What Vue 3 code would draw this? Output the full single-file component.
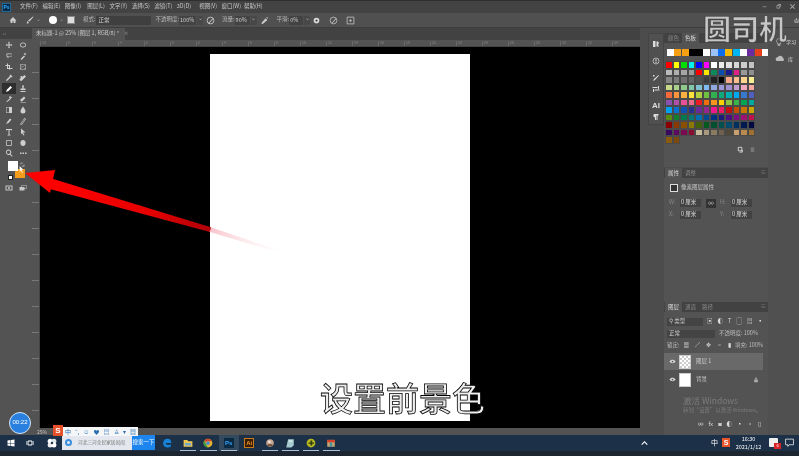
<script setup>
const menus = ['文件(F)','编辑(E)','图像(I)','图层(L)','文字(Y)','选择(S)','滤镜(T)','3D(D)','视图(V)','窗口(W)','帮助(H)']
const tools = [
  'M8 1l2 3H9v3h3V6l3 2-3 2V9H9v3h1l-2 3-2-3h1V9H4v1L1 8l3-2v1h3V4H6z',
  'M8 3c4 0 6 2 6 5s-2 5-6 5-6-2-6-5 2-5 6-5zm0 1.500C5 4.500 3.500 6 3.500 8S5 11.500 8 11.500 12.500 10 12.500 8 11 4.500 8 4.500z',
  'M3 3h10v7H8l-2 2v2L5 10 3 9zm1.500 1.500v3.500l2 1h6V4.500z',
  'M3 14l7-7 2 2-7 7zM12 1l1 2 2 1-2 1-1 2-1-2-2-1 2-1z',
  'M4 1h2v9h9v2H4zM1 4h9v9H8V6H1z',
  'M2 3h12v10H2zm1 1v8h10V4zM3 4l10 8-.500.500L3 4.500zM13 4L3 12l-.500-.500L13 3.500z',
  'M11 1l4 4-2 2-1-1-7 7-3 1 1-3 7-7-1-1z',
  'M11 2l3 3-9 9-3-1-1-3zM3 4h3v3H3z',
  'M2 14l2-5 7-7 3 3-7 7z',
  'M6 1h4l-1 6h4v3H3V7h4zM3 12h10v2H3z',
  'M2 14l7-7 2 2-7 5zM10 2l4 3-3 3-3-3z',
  'M6 13l7-7-3-3-8 7 3 3zM3 14h11v1H3z',
  'M2 2h12v12H2zm1 1v10h5V3z',
  'M8 1c3 5 5 7 5 9a5 5 0 0 1-10 0c0-2 2-4 5-9z',
  'M2 14l3-5 5-6 3 2-5 6-5 3z',
  'M3 13L11 2l3 2-8 11-3 1zm1 0l1 1 7-9-1-1z',
  'M2 2h12v3h-1l-1-1H9v9l2 1v1H5v-1l2-1V4H4L3 5H2z',
  'M4 1l9 8H8l3 5-2 1-3-5-2 3z',
  'M4 2h8a3 3 0 0 1 2 2v8a3 3 0 0 1-2 2H4a3 3 0 0 1-2-2V4a3 3 0 0 1 2-2zm0 1.500A.500.500 0 0 0 3.500 4v8a.500.500 0 0 0 .500.500h8a.500.500 0 0 0 .500-.500V4a.500.500 0 0 0-.500-.500z',
  'M3 9c-1-4 2-7 5-7s6 3 5 7c0 3-2 5-5 5s-5-2-5-5z',
  'M7 1a5.500 5.500 0 0 1 4.300 9l4 4-1.300 1.300-4-4A5.500 5.500 0 1 1 7 1zm0 2a3.500 3.500 0 1 0 0 7 3.500 3.500 0 0 0 0-7z',
  'M2 7h3v3H2zM7 7h3v3H7zM12 7h3v3h-3z'
]
const top = ['#fff','#f5a012','#f5a012','#000','#000','#fff','#9cc3f5','#0a6cf0','#f7b900','#00b4f0','#fff','#6a2ca0','#e8401c','#fff']
const swatches = [
  '#f00','#ff0','#00e000','#00f0f0','#00f','#f0f','#fff','#ebebeb','#e1e1e1','#d7d7d7','#cdcdcd','#c3c3c3',
  '#b9b9b9','#afafaf','#a5a5a5','#9b9b9b','#f00','#ffe600','#0a8a5a','#0a4fb0','#1a1a90','#e0208a','#999','#8f8f8f',
  '#858585','#7b7b7b','#6f6f6f','#656565','#505050','#3c3c3c','#222','#000','#f7a98a','#f9bb90','#fbd28e','#f7ef90',
  '#c8d88a','#a8d08a','#8fca8a','#80c8a8','#80c0d0','#80b8f0','#90a8e0','#9a98d8','#a090d0','#c09cd0','#f0a8c0','#f4a8a0',
  '#f26a3c','#f7943c','#fbb040','#fde23a','#b0d040','#70c040','#30b050','#10a878','#00b0b0','#00a8f0','#3878d0','#5060c0',
  '#8a50b0','#b050a8','#e8509a','#ee6a8a','#ed1c24','#f26d0c','#f7941e','#fdd000','#8dc63f','#39b54a','#00a651','#00a99d',
  '#00a0f0','#0a70d0','#1050b0','#2a3090','#6a2a9a','#92278f','#ec1a8c','#ed1c64','#c01010','#c05000','#c87800','#c8a800',
  '#5a8a10','#108030','#007a50','#007a78','#0070b0','#004a90','#003080','#1a1a78','#4a1080','#7a1080','#a01070','#c01050',
  '#8a0000','#8a3a00','#8a5000','#8a7a00','#406010','#005a20','#005030','#005050','#004a70','#003060','#001a50','#000a40',
  '#3a0a60','#5a0a60','#7a0a50','#8a0a30','#c8b89a','#a89880','#8a7a60','#706050','#504838','#c8a070','#b88a50','#a07030',
  '#8a5a10','#7a4a10'
]
const rulerTop = ['10','8','6','4','2','0','2','4','6','8','10','12','14','16','18','20','22','24','26','28','30','32','34']
const imeIcons = ['中','°,','☺','♥','▤','♙','▾','▦']
</script>

<template>
  <div class="app">
    <header class="menubar">
      <span class="logo">Ps</span>
      <span v-for="m in menus" :key="m" class="menu">{{ m }}</span>
      <span class="winctl">
        <svg viewBox="0 0 8 8"><path d="M1 4h6v1H1z" /></svg>
        <svg viewBox="0 0 8 8"><path d="M1 2h5v5H1zm1 1v3h3V3zM3 0h5v5H7V1H3z" /></svg>
        <svg viewBox="0 0 8 8"><path d="M1 0l3 3 3-3 1 1-3 3 3 3-1 1-3-3-3 3-1-1 3-3-3-3z" /></svg>
      </span>
    </header>

    <div class="options">
      <svg class="ic" viewBox="0 0 16 16"><path d="M8 2l7 7h-2v5H9v-4H7v4H3V9H1z" /></svg>
      <svg class="ic brush" viewBox="0 0 16 16"><path d="M14 1l1 1-8 9-3-2zM3 10l3 3c-1 2-3 2-5 2 1-1 1-4 2-5z" /></svg>
      <span class="caret">⌄</span>
      <span class="dot"></span>
      <span class="caret">⌄</span>
      <span class="pbtn"></span>
      <span class="lbl mode">模式:</span>
      <span class="select">正常</span>
      <span class="lbl opa">不透明度:</span><span class="val v1">100%</span><span class="mini">⌄</span>
      <svg class="ic gap" viewBox="0 0 16 16"><circle cx="8" cy="8" r="6" fill="none" stroke="#ccc" stroke-width="1.5" /><path d="M4 13l8-9 1 1-8 9z" /></svg>
      <span class="lbl">流量:</span><span class="val v2">90%</span><span class="mini">⌄</span>
      <svg class="ic gap g2" viewBox="0 0 16 16"><path d="M2 13l8-9 3 3-8 7zM11 2h3v3h-1V3h-2z" /></svg>
      <span class="lbl">平滑:</span><span class="val v3">0%</span><span class="mini">⌄</span>
      <svg class="ic gap g3" viewBox="0 0 16 16"><circle cx="8" cy="8" r="5" fill="#ddd" /><circle cx="8" cy="8" r="2" fill="#444" /></svg>
      <svg class="ic gap g3" viewBox="0 0 16 16"><circle cx="8" cy="8" r="6" fill="none" stroke="#bbb" stroke-width="1.5" /><path d="M5 12l7-8 1 1-7 8z" /></svg>
      <svg class="ic gap g3" viewBox="0 0 16 16"><path d="M2 2h12v12H2z" fill="none" stroke="#bbb" stroke-width="1.5" /><circle cx="8" cy="8" r="2" /></svg>
    </div>

    <div class="workspace">
      <aside class="tools">
        <div class="collapse">‹‹</div>
        <div class="toolgrid">
          <span v-for="(d, i) in tools" :key="i" class="tool" :class="{ on: i === 8 }">
            <svg viewBox="0 0 16 16"><path :d="d" /></svg>
          </span>
        </div>
        <div class="colors">
          <span class="bg"></span>
          <span class="fg"></span>
          <svg class="swap" viewBox="0 0 8 8"><path d="M1 1h4v1H2v2H1zM7 7H3V6h3V4h1z" /></svg>
          <svg class="cursor" viewBox="0 0 8 11"><path d="M1 0l6 6H4l2 4-1 1-2-4-2 2z" /></svg>
          <span class="reset"></span>
        </div>
        <div class="modes">
          <svg viewBox="0 0 16 16"><path d="M1 3h14v10H1zm2 2v6h10V5z" /><circle cx="8" cy="8" r="2" /></svg>
          <svg viewBox="0 0 16 16"><path d="M5 2h10v8h-4v3H1V6h4zM6 3v3h5v3h3V3z" /></svg>
        </div>
      </aside>

      <main class="doc">
        <div class="tabs"><span class="tab">未标题-1 @ 25% (图层 1, RGB/8) * <em>×</em></span></div>
        <div class="ruler-top">
          <span v-for="(r, i) in rulerTop" :key="i">{{ r }}</span>
        </div>
        <div class="middle">
          <div class="ruler-left"></div>
          <div class="canvas">
            <div class="paper"></div>
            <div class="caption">设置前景色</div>
          </div>
        </div>
        <div class="status">25%</div>
      </main>

      <section class="dock">
        <div class="collapsed">
          <svg viewBox="0 0 16 16"><path d="M2 2h5v12H2zM9 3h3l2 3-2 3 2 4H9z" /></svg>
          <svg class="lower" viewBox="0 0 16 16"><circle cx="8" cy="8" r="6" fill="none" stroke="#ddd" stroke-width="1.4" /><path d="M7 4h2v5H7zM7 10h2v2H7z" /></svg>
          <svg class="lower" viewBox="0 0 16 16"><path d="M2 14l2-4 9-8 1 1-8 9zM2 2h3v3H2z" /></svg>
          <svg viewBox="0 0 16 16"><path d="M1 4h10v2H1zM5 9h10v2H5zM12 2h2v6h-2zM2 8h2v6H2z" /></svg>
          <b class="lower">AI</b>
          <svg viewBox="0 0 16 16"><path d="M4 2h9v3h-2v9H9V5H8v9H6V9a4 4 0 0 1-2-7z" /></svg>
        </div>

        <div class="panels">
          <div class="panel swatch-panel">
            <div class="ptabs"><span class="dim">颜色</span><span class="active">色板</span></div>
            <div class="swatch-top">
              <i v-for="(c, i) in top" :key="i" :style="{ background: c }"></i>
            </div>
            <div class="swatch-grid">
              <i v-for="(c, i) in swatches" :key="i" :style="{ background: c }"></i>
            </div>
            <div class="pfoot">
              <svg viewBox="0 0 16 16"><path d="M3 3h8v8H3zM12 9v5H6" fill="none" stroke="#ddd" stroke-width="2" /></svg>
              <svg viewBox="0 0 16 16"><path d="M4 3h8v11H4z" fill="#777" /></svg>
            </div>
          </div>

          <div class="panel prop-panel">
            <div class="ptabs"><span class="active">属性</span><span class="dim">调整</span><em class="pmenu">≡</em></div>
            <div class="prophead"><span class="propicon"></span>像素图层属性</div>
            <div class="propbody">
              <div class="prow"><label>W:</label><span class="field">0 厘米</span><span class="link">∞</span><label>H:</label><span class="field">0 厘米</span></div>
              <div class="prow"><label>X:</label><span class="field">0 厘米</span><span class="link none"></span><label>Y:</label><span class="field">0 厘米</span></div>
            </div>
          </div>

          <div class="panel layer-panel">
            <div class="ptabs"><span class="active">图层</span><span class="dim">通道</span><span class="dim">路径</span><em class="pmenu">≡</em></div>
            <div class="lrow first">
              <span class="lsel kind">⚲ 类型</span>
              <span class="licons"><i>▣</i><i>◐</i><i>T</i><i>▢</i><i>▤</i><i>▪</i></span>
            </div>
            <div class="lrow">
              <span class="lsel blend">正常</span>
              <span class="ltxt">不透明度: 100%</span>
            </div>
            <div class="lrow">
              <span class="ltxt">锁定:</span><span class="licons"><i>▦</i><i>∕</i><i>✥</i><i>▫</i><i>▮</i></span><span class="ltxt">填充: 100%</span>
            </div>
            <div class="layer sel">
              <svg class="eye" viewBox="0 0 16 10"><path d="M1 5c4-5 10-5 14 0-4 5-10 5-14 0z" /><circle cx="8" cy="5" r="2" fill="#555" /></svg>
              <span class="thumb checker"></span><span>图层 1</span>
            </div>
            <div class="layer">
              <svg class="eye" viewBox="0 0 16 10"><path d="M1 5c4-5 10-5 14 0-4 5-10 5-14 0z" /><circle cx="8" cy="5" r="2" fill="#555" /></svg>
              <span class="thumb"></span><span>背景</span>
              <svg class="lockic" viewBox="0 0 16 16"><path d="M3 7h10v7H3zM5 7V4a3 3 0 0 1 6 0v3H9V4a1 1 0 0 0-2 0v3z" /></svg>
            </div>
            <div class="activate">
              <p class="a1">激活 Windows</p>
              <p class="a2">转到“设置”以激活 Windows。</p>
            </div>
            <div class="lfoot">
              <span>∞</span><span>fx</span><span>◙</span><span>◐</span><span>▪</span><span>▫</span><span>▯</span>
            </div>
          </div>
        </div>

        <div class="side">
          <svg class="power" viewBox="0 0 8 8"><path d="M3.500 0h1v4h-1zM1 2h1v4h4V2h1v5H1z" /></svg>
          <div class="sideitem"><svg viewBox="0 0 16 16"><path d="M8 1a5 5 0 0 1 3 9v2H5v-2a5 5 0 0 1 3-9zM6 13h4v2H6z" fill="none" stroke="#ddd" /></svg>学习</div>
          <div class="sideitem lib"><svg viewBox="0 0 16 10"><path d="M4 9a3 3 0 0 1 0-6 5 5 0 0 1 9 1 3 3 0 0 1 0 5z" /></svg>库</div>
        </div>
      </section>
    </div>

    <footer class="taskbar">
      <svg class="tb win" viewBox="0 0 16 16"><path d="M1 3l6-1v6H1zM8 2l7-1v7H8zM1 9h6v5l-6-1zM8 9h7v6l-7-1z" /></svg>
      <svg class="tb view" viewBox="0 0 16 16"><path d="M1 4h2v8H1zM13 4h2v8h-2zM4 3h8v10H4zM5 5v6h6V5z" /></svg>
      <svg class="tb multi" viewBox="0 0 16 16"><circle cx="5" cy="5" r="4" fill="#fff" /><circle cx="11" cy="5" r="4" fill="#dfe8e8" /><circle cx="5" cy="11" r="4" fill="#eee" /><circle cx="11" cy="11" r="4" fill="#fff" /><circle cx="8" cy="8" r="2" fill="#1f3550" /></svg>
      <div class="search"><span class="sicon"></span><span class="stext">河北三河全民家居闹闹</span><span class="sbtn">搜索一下</span></div>
      <div class="apps">
        <span class="app-i"><svg viewBox="0 0 16 16"><path d="M2 8c0-5 3-7 7-7 4 0 6 3 6 7H6c0 3 4 4 8 2v4c-6 3-13 0-12-6z" fill="#1683d8" /></svg></span>
        <span class="app-i u"><svg viewBox="0 0 16 16"><path d="M1 3h6l1 2h7v9H1z" fill="#f0c850" /><path d="M3 8h10v4H3z" fill="#6fa8c8" /></svg></span>
        <span class="app-i u"><svg viewBox="0 0 16 16"><circle cx="8" cy="8" r="7" fill="#e6b72e" /><path d="M8 1a7 7 0 0 1 6 4H8a3 3 0 0 0-3 2L2.500 4A7 7 0 0 1 8 1z" fill="#d8402e" /><path d="M2 4l3 6 3 5a7 7 0 0 1-6-11z" fill="#3a9a48" /><circle cx="8" cy="8" r="3" fill="#4a8ad0" /></svg></span>
        <span class="app-i on"><span class="ps">Ps</span></span>
        <span class="app-i"><span class="ai">Ai</span></span>
        <span class="app-i u"><svg viewBox="0 0 16 16"><circle cx="8" cy="8" r="6" fill="#c8a890" /><circle cx="7" cy="6" r="2" fill="#f2ede8" /><path d="M4 10h8v3H4z" fill="#6b4c38" /></svg></span>
        <span class="app-i u"><svg viewBox="0 0 16 16"><path d="M5 2h9v10l-4 3H2z" fill="#a6ccd0" /><path d="M6 4h6v2H6z" fill="#e5f0f0" /></svg></span>
        <span class="app-i u"><svg viewBox="0 0 16 16"><circle cx="8" cy="8" r="7" fill="#b8b820" /><path d="M7 4h3v3h3v2h-3v3H7V9H4V7h3z" fill="#334010" /></svg></span>
        <span class="app-i u"><svg viewBox="0 0 16 16"><path d="M2 3h12v11H2z" fill="#c8a870" /><path d="M2 3h12v4H2z" fill="#d8402a" /><path d="M6 7h4v7H6z" fill="#4a90a0" /></svg></span>
      </div>
      <div class="tray">
        <svg class="chev" viewBox="0 0 8 5"><path d="M4 0l4 4-1 1-3-3-3 3-1-1z" /></svg>
        <span class="zh">中</span>
        <span class="s-tray">S</span>
        <span class="clock">16:30<br />2021/1/12</span>
        <span class="note"><i>6</i></span>
        <svg class="msg" viewBox="0 0 16 16"><path d="M1 2h14v10H7l-2 3v-3H1z" fill="none" stroke="#eee" stroke-width="1.4" /></svg>
      </div>
    </footer>

    <div class="watermark">圆司机</div>
    <div class="timer">00:22</div>
    <div class="imebar">
      <span class="sg">S</span>
      <div class="imeicons"><span v-for="(m, i) in imeIcons" :key="i">{{ m }}</span></div>
    </div>
    <svg class="arrow" viewBox="0 0 799 456">
      <defs>
        <linearGradient id="shaft" gradientUnits="userSpaceOnUse" x1="50" y1="180" x2="290" y2="255">
          <stop offset="0" stop-color="#f00" />
          <stop offset="0.4" stop-color="#e80000" />
          <stop offset="0.665" stop-color="#b00008" />
          <stop offset="0.67" stop-color="#f8c4cc" />
          <stop offset="1" stop-color="#fff" stop-opacity="0.1" />
        </linearGradient>
      </defs>
      <polygon points="50,178 210,227 290,254 290,256 210,232 46,188" fill="url(#shaft)" />
      <polygon points="25,173 55,170 50,193" fill="#f00" />
    </svg>
  </div>
</template>

<style>
html, body { margin: 0; background: #535353; overflow: hidden; }
</style>

<style scoped>
* { box-sizing: border-box; }
.app {
  position: relative; width: 799px; height: 456px; overflow: hidden;
  display: flex; flex-direction: column; background: #535353; color: #c8c8c8;
  font: 5.500px/1 "Noto Sans CJK SC", "Liberation Sans", sans-serif;
  filter: blur(0.35px);
}
svg { fill: currentColor; display: block; }
i { font-style: normal; }
.menubar { height: 13px; flex: none; display: flex; align-items: center; background: #434343; border-top: 1px solid #2f2f2f; position: relative; }
.logo { width: 9px; height: 9px; margin: 0 9px 0 2px; background: #0a2a44; color: #31a8ff; border: 1px solid #1f6a9a; font: 700 5px/7px "Liberation Sans", sans-serif; text-align: center; }
.menu { width: 22.400px; white-space: nowrap; }
.winctl { position: absolute; right: 4px; top: 3px; display: flex; gap: 9px; color: #aaa; }
.winctl svg { width: 5px; height: 5px; }
.options { height: 15px; flex: none; display: flex; align-items: center; background: #505050; border-bottom: 1px solid #3e3e3e; padding-left: 9px; }
.ic { width: 8px; height: 8px; color: #ccc; flex: none; }
.brush { margin-left: 9px; }
.caret { width: 6px; color: #999; margin: 0 1px; text-align: center; }
.dot { width: 8px; height: 8px; border-radius: 50%; background: #fff; margin-left: 7px; }
.pbtn { width: 8px; height: 8px; background: #ddd; border: 1px solid #888; margin-left: 2px; }
.lbl { white-space: nowrap; color: #b8b8b8; }
.mode { margin-left: 8px; }
.select { width: 55px; height: 9px; background: #3f3f3f; padding: 2px 3px; color: #ccc; }
.opa { margin-left: 5px; }
.val { height: 9px; background: #434343; color: #ccc; padding: 2px 1px; }
.v1 { width: 17px; }
.v2 { width: 15px; }
.v3 { width: 14px; }
.mini { width: 6px; height: 9px; background: #484848; color: #aaa; text-align: center; margin-left: 1px; }
.gap { margin: 0 7px 0 3px; width: 9px; height: 9px; }
.g2 { margin-right: 8px; }
.g3 { margin: 0 6px 0 2px; }
.workspace { flex: 1; min-height: 0; display: flex; }
.tools { width: 32px; flex: none; background: #535353; position: relative; }
.collapse { height: 11px; color: #999; padding: 2px 0 0 3px; background: #424242; font-size: 5px; }
.toolgrid { display: grid; grid-template-columns: 14px 14px; grid-auto-rows: 10.800px; padding: 1px 0 0 2px; }
.tool { display: flex; align-items: center; justify-content: center; color: #cfcfcf; }
.tool svg { width: 8px; height: 8px; }
.tool.on { background: #2e2e2e; color: #fff; }
.colors { position: relative; height: 25px; }
.fg { position: absolute; left: 8px; top: 2px; width: 10px; height: 10px; background: #fff; }
.bg { position: absolute; left: 15px; top: 10px; width: 10px; height: 9px; background: #f59c1a; }
.swap { position: absolute; left: 20px; top: 3px; width: 5px; height: 5px; color: #ccc; }
.cursor { position: absolute; left: 19px; top: 7px; width: 5px; height: 7px; color: #fff; }
.reset { position: absolute; left: 8px; top: 16px; width: 5px; height: 5px; background: #fff; border: 1px solid #222; }
.modes { display: flex; gap: 6px; padding-left: 5px; color: #c8c8c8; }
.modes svg { width: 8px; height: 8px; }
.doc { width: 608px; flex: none; display: flex; flex-direction: column; }
.tabs { height: 12px; flex: none; background: #424242; }
.tab { display: inline-block; height: 12px; width: 93px; background: #535353; padding: 3px 0 0 4px; white-space: nowrap; color: #c8c8c8; }
.tab em { font-style: normal; margin-left: 3px; color: #999; }
.ruler-top { height: 7px; flex: none; background: #535353; margin-left: 8px; display: grid; grid-template-columns: repeat(23, 26px); font-size: 3.500px; color: #888; padding-top: 1px; border-bottom: 1px solid #444; }
.ruler-top span { border-left: 1px solid #6a6a6a; padding-left: 1px; }
.middle { flex: 1; display: flex; min-height: 0; }
.ruler-left { width: 8px; flex: none; background: repeating-linear-gradient(#535353 0 25px, #777 25px 26px); border-right: 1px solid #444; }
.canvas { width: 600px; background: #000; position: relative; padding: 7px 0 0 170px; }
.paper { width: 260px; height: 367px; background: #fff; }
.caption {
  position: absolute; left: 280px; top: 334px; white-space: nowrap;
  font: 500 33px/1 "Noto Sans CJK SC", sans-serif; color: #eee;
  -webkit-text-stroke: .8px #000;
}
.status { height: 7px; flex: none; background: #535353; padding: 1px 0 0 5px; font-size: 5px; }
.dock { flex: 1; display: flex; padding-left: 8px; background: #4c4c4c; min-width: 0; }
.collapsed { width: 16px; height: 92px; margin-top: 5px; flex: none; background: #505050; border: 1px solid #444; display: flex; flex-direction: column; align-items: center; color: #ddd; padding-top: 6px; gap: 3px; }
.collapsed svg { width: 8px; height: 8px; }
.collapsed .lower { margin-top: 6px; }
.collapsed b { font: 700 8px/8px "Liberation Sans", sans-serif; }
.panels { width: 104px; flex: none; display: flex; flex-direction: column; }
.panel { background: #535353; }
.ptabs { height: 10px; display: flex; background: #424242; padding-left: 1px; position: relative; color: #bbb; }
.ptabs span { width: 17px; text-align: center; line-height: 10px; }
.ptabs .active { background: #535353; color: #ddd; }
.ptabs .dim { color: #888; }
.pmenu { position: absolute; right: 2px; top: 2px; font-style: normal; color: #999; }
.swatch-panel { margin-top: 5px; height: 134px; }
.swatch-top { display: grid; grid-template-columns: repeat(14, 7px); gap: 0 .3px; padding: 6px 0 0 3px; }
.swatch-top i { height: 7px; }
.swatch-grid { display: grid; grid-template-columns: repeat(12, 7.500px); grid-auto-rows: 7.500px; padding: 5px 0 0 1px; }
.swatch-grid i { border: .5px solid #4a4a4a; }
.pfoot { display: flex; justify-content: flex-end; gap: 5px; padding: 0 12px; margin-top: 2px; }
.pfoot svg { width: 7px; height: 7px; }
.prop-panel { height: 134px; margin-top: 1px; }
.prophead { display: flex; align-items: center; height: 16px; gap: 3px; padding: 3px 0 0 6px; color: #c8c8c8; }
.propicon { width: 8px; height: 8px; background: #333; border: 1px solid #ddd; }
.propbody { padding: 3px 0 0 5px; }
.prow { display: flex; align-items: center; height: 12px; }
.prow label { width: 11px; color: #888; }
.field { width: 21px; height: 8px; background: #424242; color: #ddd; padding: 1px 0 0 1px; margin-right: 5px; }
.link { width: 10px; height: 9px; background: #333; text-align: center; margin-right: 4px; line-height: 8px; }
.link.none { background: none; }
.layer-panel { flex: 1; position: relative; }
.lrow { display: flex; align-items: center; height: 12px; padding: 0 5px 0 3px; gap: 4px; white-space: nowrap; }
.lrow.first { margin-top: 4px; }
.lsel { background: #444; height: 8px; padding: 1px 2px; }
.kind { width: 36px; flex: none; }
.blend { width: 48px; flex: none; }
.licons { flex: 1; display: flex; justify-content: space-between; color: #ddd; }
.ltxt { color: #bbb; }
.layer { height: 17px; margin-right: 5px; display: flex; align-items: center; gap: 3px; padding-left: 5px; color: #ccc; position: relative; margin-top: 1px; }
.layer.sel { background: #696969; }
.eye { width: 7px; height: 5px; color: #ddd; margin-right: 0; }
.thumb { width: 12px; height: 14px; background: #fff; border: 1px solid #ccc; margin-right: 2px; }
.checker { background: repeating-conic-gradient(#ccc 0 25%, #fff 0 50%) 0 0 / 4px 4px; }
.lockic { position: absolute; right: 4px; width: 6px; height: 6px; color: #aaa; }
.activate { padding: 8px 0 0 19px; color: #7c7c7c; }
.activate p { margin: 0; white-space: nowrap; }
.a1 { font-size: 8.500px; }
.a2 { font-size: 5.400px; margin-top: 3px !important; }
.lfoot { display: flex; justify-content: flex-end; gap: 5px; padding: 9px 7px 0 0; color: #ddd; }
.side { flex: 1; min-width: 0; padding-top: 8px; font-size: 5px; color: #ddd; background: #505050; position: relative; }
.power { position: absolute; right: 0; top: -10px; width: 5px; height: 5px; color: #ddd; }
.sideitem { display: flex; align-items: center; gap: 3px; height: 11px; padding-left: 7px; white-space: nowrap; }
.sideitem svg { width: 8px; height: 8px; }
.lib { margin-top: 6px; }
.lib svg { width: 10px; height: 7px; color: #bbb; }
.taskbar { height: 21px; flex: none; display: flex; align-items: center; background: linear-gradient(#1c3048 0 16px, #1c2530 16px); color: #fff; position: relative; }
.tb { position: absolute; top: 4px; width: 8px; height: 8px; }
.win { left: 7px; }
.view { left: 26px; }
.multi { left: 47px; width: 10px; height: 10px; top: 3px; }
.search { position: absolute; left: 62px; top: 0; width: 93px; height: 15px; background: #e4e8ee; display: flex; align-items: center; }
.sicon { width: 7px; height: 7px; border-radius: 50%; border: 2px solid #3a8ee0; margin: 0 6px 0 3px; flex: none; }
.stext { flex: 1; min-width: 0; color: #777; white-space: nowrap; font-size: 4.700px; }
.sbtn { width: 23px; height: 15px; flex: none; background: #1d86ee; color: #fff; text-align: center; line-height: 15px; white-space: nowrap; }
.apps { position: absolute; left: 157px; top: 0; display: flex; }
.app-i { width: 20.500px; height: 16px; display: flex; align-items: center; justify-content: center; position: relative; }
.app-i svg { width: 10px; height: 10px; }
.app-i.u::after, .app-i.on::after { content: ""; position: absolute; left: 2px; right: 2px; bottom: 0; height: 1px; background: #a9c4dc; }
.app-i.on { background: #33495e; }
.ps, .ai { width: 10px; height: 10px; font: 700 6px/10px "Liberation Sans", sans-serif; text-align: center; }
.ps { background: #0a2a44; color: #31a8ff; }
.ai { background: #3a1d05; color: #f7971e; border: 1px solid #c87b1a; line-height: 8px; }
.tray { position: absolute; left: 0; top: 0; width: 799px; height: 20px; pointer-events: none; }
.tray > * { position: absolute; }
.chev { left: 641px; top: 6px; width: 7px; height: 4px; }
.zh { left: 711px; top: 4px; font-size: 7px; }
.s-tray { left: 722px; top: 3px; width: 8px; height: 9px; background: #e8552a; font: 700 7px/9px "Liberation Sans", sans-serif; text-align: center; }
.clock { left: 735px; top: 1px; width: 27px; text-align: center; line-height: 7.500px; font-size: 5.500px; white-space: nowrap; }
.note { left: 769px; top: 3px; width: 9px; height: 9px; background: #eee; border-radius: 1px; }
.note i { position: absolute; right: -3px; bottom: -2px; width: 7px; height: 6px; background: #d8222a; font: 4px/6px "Liberation Sans", sans-serif; text-align: center; }
.msg { left: 785px; top: 3px; width: 9px; height: 9px; }
.watermark {
  position: absolute; left: 703px; top: 14px; font: 700 28px/1 "Noto Sans CJK SC", sans-serif;
  color: #c6c6c6; white-space: nowrap; -webkit-text-stroke: .6px #3a3a3a;
}
.timer { position: absolute; left: 9px; top: 412px; width: 22px; height: 22px; border-radius: 50%; background: #2a80de; border: 1.500px solid #cfe6fb; color: #fff; text-align: center; line-height: 19px; font-size: 6px; font-family: "Liberation Sans", sans-serif; }
.imebar { position: absolute; left: 53px; top: 425px; display: flex; align-items: flex-end; }
.sg { width: 10px; height: 11px; background: #e8502a; color: #fff; font: 700 8px/11px "Liberation Sans", sans-serif; text-align: center; }
.imeicons { width: 75px; height: 9px; background: #f4f6f8; color: #2a6fb0; display: flex; align-items: center; justify-content: space-around; font-size: 6px; white-space: nowrap; overflow: hidden; }
.arrow { position: absolute; left: 0; top: 0; width: 799px; height: 456px; pointer-events: none; }
</style>
